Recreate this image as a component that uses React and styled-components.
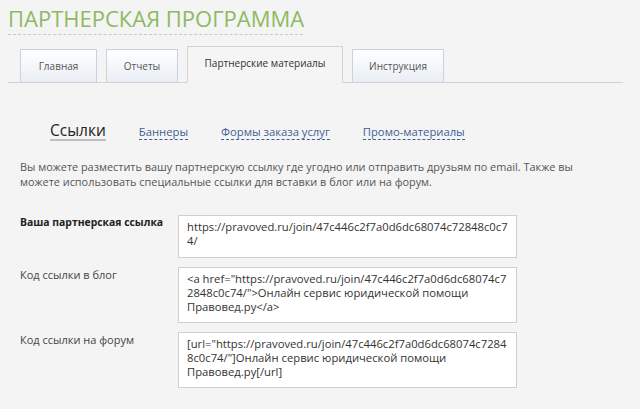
import React from "react";
import styled, { createGlobalStyle } from "styled-components";

const GlobalStyle = createGlobalStyle`
    body {
        margin: 0;
        background: #f4f4f4;
        font-family: 'Open Sans', 'Liberation Sans', sans-serif;
    }
`;

const tabs = [
    { id: "main", title: "Главная", width: 77 },
    { id: "reports", title: "Отчеты", width: 72 },
    { id: "materials", title: "Партнерские материалы", width: 156, active: true },
    { id: "help", title: "Инструкция", width: 92 },
];

const subtabs = ["Ссылки", "Баннеры", "Формы заказа услуг", "Промо-материалы"];

const fields = [
    {
        label: "Ваша партнерская ссылка",
        bold: true,
        height: 43,
        lines: ["https://pravoved.ru/join/47c446c2f7a0d6dc68074c72848c0c7", "4/"],
    },
    {
        label: "Код ссылки в блог",
        height: 56,
        lines: [
            '<a href="https://pravoved.ru/join/47c446c2f7a0d6dc68074c7',
            '2848c0c74/">Онлайн сервис юридической помощи',
            "Правовед.ру</a>",
        ],
    },
    {
        label: "Код ссылки на форум",
        height: 56,
        lines: [
            '[url="https://pravoved.ru/join/47c446c2f7a0d6dc68074c7284',
            '8c0c74/"]Онлайн сервис юридической помощи',
            "Правовед.ру[/url]",
        ],
    },
];

export default function App() {
    return (
        <>
            <GlobalStyle />
            <Page>
                <Title>ПАРТНЕРСКАЯ ПРОГРАММА</Title>
                <TabBar>
                    {tabs.map((t) => (
                        <Tab key={t.id} $active={t.active} $width={t.width}>
                            {t.title}
                        </Tab>
                    ))}
                </TabBar>
                <SubNav>
                    {subtabs.map((s, i) => (
                        <SubTab key={s} $active={i === 0}>{s}</SubTab>
                    ))}
                </SubNav>
                <Intro>
                    Вы можете разместить вашу партнерскую ссылку где угодно или отправить друзьям по email. Также вы
                    можете использовать специальные ссылки для вставки в блог или на форум.
                </Intro>
                <Fields>
                    {fields.map((f) => (
                        <FieldRow key={f.label}>
                            <Label $bold={f.bold}>{f.label}</Label>
                            <CodeBox $height={f.height}>
                                {f.lines.map((l, i) => (
                                    <div key={i}>{l}</div>
                                ))}
                            </CodeBox>
                        </FieldRow>
                    ))}
                </Fields>
            </Page>
        </>
    );
}

const Page = styled.div`
    width: 615px;
    padding: 0 0 0 8px;
`;

const Title = styled.h1`
    margin: 0;
    padding: 6px 0 4px;
    width: 295px;
    font-size: 22px;
    font-weight: 400;
    line-height: 24px;
    color: #8dba62;
    border-bottom: 1px dashed #c8c8c8;
    white-space: nowrap;
`;

const TabBar = styled.div`
    display: flex;
    align-items: flex-end;
    gap: 9px;
    height: 47px;
    padding-left: 12px;
    border-bottom: 1px solid #cfd3d8;
`;

const Tab = styled.div`
    width: ${(p) => p.$width}px;
    height: ${(p) => (p.$active ? 37 : 34)}px;
    box-sizing: border-box;
    display: flex;
    justify-content: center;
    align-items: center;
    padding-bottom: ${(p) => (p.$active ? "3px" : "0")};
    margin-bottom: -1px;
    font-size: 10px;
    color: ${(p) => (p.$active ? "#333" : "#555")};
    border: 1px solid ${(p) => (p.$active ? "#d2d2d2" : "#c5d3e3")};
    border-bottom: ${(p) => (p.$active ? "1px solid #f4f4f4" : "1px solid #cfd3d8")};
    background: ${(p) => (p.$active ? "#f5f5f5" : "linear-gradient(#ffffff, #e9eef5)")};
`;

const SubNav = styled.div`
    display: flex;
    align-items: baseline;
    gap: 33px;
    padding: 38px 0 0 42px;
    height: 22px;
`;

const SubTab = styled.span`
    font-size: ${(p) => (p.$active ? "15.5px" : "11.25px")};
    color: ${(p) => (p.$active ? "#222" : "#3f5f97")};
    border-bottom: ${(p) => (p.$active ? "2px solid #bfbfbf" : "1px dashed #3f5f97")};
    line-height: ${(p) => (p.$active ? "18px" : "14px")};
`;

const Intro = styled.p`
    margin: 16px 0 0 12px;
    font-size: 10.9px;
    line-height: 15px;
    color: #555;
    width: 572px;
`;

const Fields = styled.div`
    display: flex;
    flex-direction: column;
    gap: 9px;
    margin: 26px 0 0 12px;
`;

const FieldRow = styled.div`
    display: flex;
`;

const Label = styled.div`
    width: 158px;
    padding-top: 0;
    font-size: ${(p) => (p.$bold ? "10.4px" : "11px")};
    font-weight: ${(p) => (p.$bold ? 700 : 400)};
    color: ${(p) => (p.$bold ? "#222" : "#444")};
`;

const CodeBox = styled.div`
    width: 339px;
    height: ${(p) => p.$height}px;
    box-sizing: border-box;
    padding: 4px 8px;
    background: #fff;
    border: 1px solid #d0d0d0;
    font-size: 11.25px;
    line-height: 14px;
    color: #333;
    white-space: nowrap;
    overflow: hidden;
`;
